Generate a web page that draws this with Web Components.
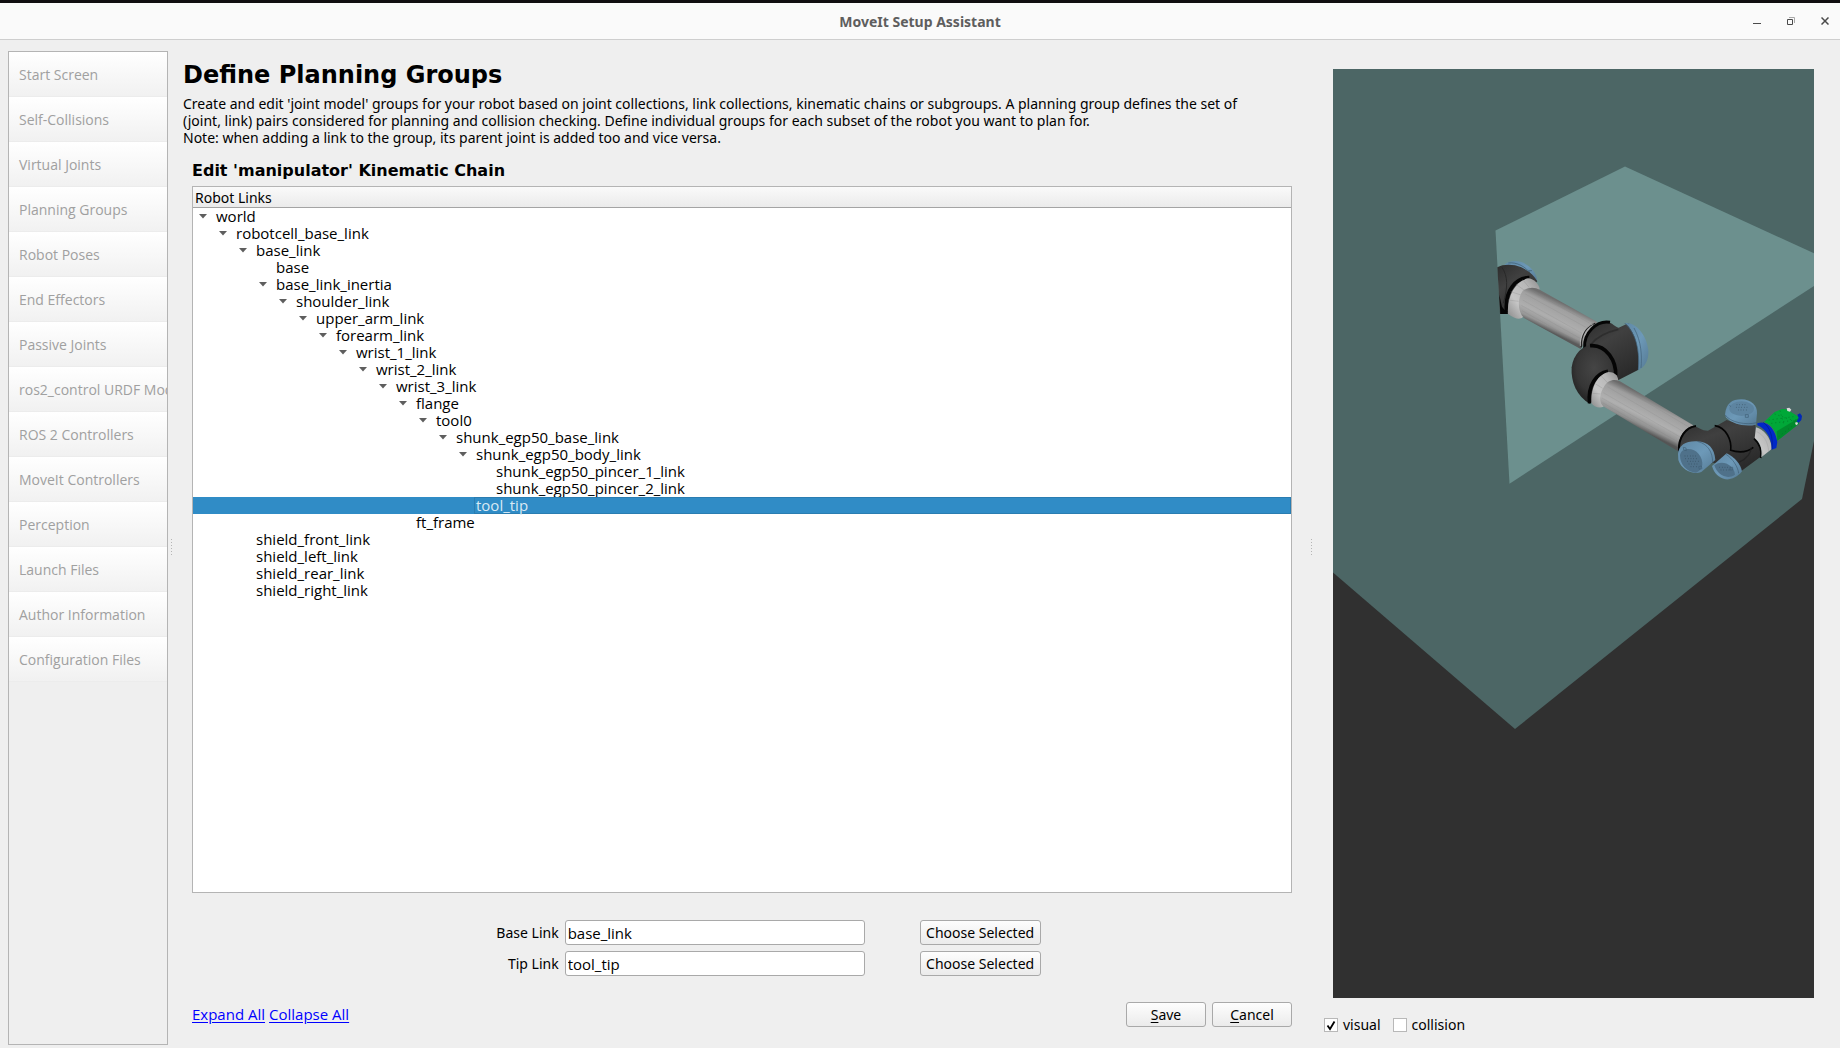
<!DOCTYPE html>
<html lang="en">
<head>
<meta charset="utf-8">
<title>MoveIt Setup Assistant</title>
<style>
  html, body { height: 100%; margin: 0; }
  body {
    --ui: "Noto Sans", "Open Sans", sans-serif;
    --tree: "Open Sans", "Noto Sans", sans-serif;
    --head: "DejaVu Sans", sans-serif;
    --line: #b4b4b4;
    --edge: #a9a9a9;
    background: #efefef;
    color: #000;
    font: 14px/17px var(--ui);
  }
</style>
</head>
<body>
<setup-window></setup-window>

<template id="t-window">
  <style>
    :host { display: flex; flex-direction: column; height: 100vh; overflow: hidden; }
    main { flex: 1; min-height: 0; display: flex; }
    .center { flex: 1; min-width: 0; display: flex; flex-direction: column; padding: 20px 16px 21px 8px; }
    h1 { margin: 0; font: bold 24px/30px var(--head); }
    .intro { margin: 5px 0 0; }
    h2 { margin: 15px 9px 5px; font: bold 16px/20px var(--head); }
    link-tree { flex: 1; min-height: 0; margin: 0 0 27px 9px; }
    .foot { display: flex; align-items: center; justify-content: space-between; margin-left: 9px; }
    .foot div { display: flex; gap: 6px; }
    .foot .links { gap: 4px; font: 15px/17px var(--tree); }
    a { color: #00f; text-decoration: underline; text-underline-offset: 2px; }
    .foot push-button { width: 80px; }
    u { text-underline-offset: 2px; }
  </style>
  <title-bar>MoveIt Setup Assistant</title-bar>
  <main>
    <nav-list></nav-list>
    <split-handle></split-handle>
    <section class="center">
      <h1>Define Planning Groups</h1>
      <p class="intro">Create and edit 'joint model' groups for your robot based on joint collections, link collections, kinematic chains or subgroups. A planning group defines the set of<br>(joint, link) pairs considered for planning and collision checking. Define individual groups for each subset of the robot you want to plan for.<br>Note: when adding a link to the group, its parent joint is added too and vice versa.</p>
      <h2>Edit 'manipulator' Kinematic Chain</h2>
      <link-tree></link-tree>
      <link-form></link-form>
      <div class="foot">
        <div class="links"><a href="#expand">Expand All</a><a href="#collapse">Collapse All</a></div>
        <div><push-button><u>S</u>ave</push-button><push-button><u>C</u>ancel</push-button></div>
      </div>
    </section>
    <split-handle></split-handle>
    <robot-panel></robot-panel>
  </main>
</template>

<template id="t-title">
  <style>
    :host { display: grid; grid-template-columns: 1fr auto 1fr; align-items: center; height: 36px; background: #fafafa; border-top: 3px solid #100e10; border-bottom: 1px solid #cecece; color: #5e5e5e; }
    h3 { grid-column: 2; margin: 0; padding-top: 2px; font: bold 14px/20px var(--ui); }
    .buttons { display: flex; justify-content: flex-end; gap: 18px; padding-right: 7px; }
    button { width: 16px; height: 16px; padding: 0; border: 0; background: none; display: grid; place-items: center; }
    svg { display: block; }
  </style>
  <h3><slot></slot></h3>
  <div class="buttons">
    <button aria-label="Minimize"><svg width="8" height="8"><path d="M0 6h8v1H0z" fill="#4a4a4a"/></svg></button>
    <button aria-label="Restore"><svg width="8" height="8" fill="none"><path d="M2 .5H7.500V6" stroke="#a8a8a8"/><path d="M.5 2.500h5v5h-5z" stroke="#4a4a4a"/></svg></button>
    <button aria-label="Close"><svg width="8" height="8"><path d="M.5.5l7 7M7.500.5l-7 7" stroke="#4a4a4a" stroke-width="1.500"/></svg></button>
  </div>
</template>

<template id="t-nav">
  <style>
    :host { display: block; flex: none; width: 158px; margin: 11px 0 3px 8px; border: 1px solid var(--line); overflow: hidden; }
    ul { margin: 0; padding: 0; list-style: none; }
    li { display: flex; align-items: center; height: 44px; padding-left: 10px; border-bottom: 1px solid #ececec; background: linear-gradient(#fff, #f1f1f1); color: #a0a0a0; white-space: nowrap; font: 14px/17px var(--tree); }
  </style>
  <ul></ul>
</template>

<template id="t-split">
  <style>
    :host { display: grid; place-items: center; flex: none; width: 7px; padding-top: 8px; }
    svg { display: block; }
  </style>
  <svg width="2" height="18"><path d="M.5 0V18" stroke="#b5b5b5" stroke-dasharray="1 2"/></svg>
</template>

<template id="t-tree">
  <style>
    :host { display: block; border: 1px solid var(--line); background: #fff; overflow: hidden; }
    .head { height: 20px; padding-left: 2px; border-bottom: 1px solid #a4a4a4; background: linear-gradient(#fafafa, #ebebeb); line-height: 21px; }
    ul { margin: 0; padding: 0; list-style: none; font: 15px/17px var(--tree); }
    li { display: flex; align-items: center; height: 17px; padding-left: calc(6px + 20px * var(--d)); }
    svg { flex: none; width: 8px; margin-right: 7px; }
    span { padding-left: 2px; }
    .sel { background: #308cc6; color: #d9e9f4; }
    .sel span { flex: 1; box-shadow: inset 0 0 0 1px #2a7db1; }
  </style>
  <div class="head">Robot Links</div>
  <ul></ul>
</template>

<template id="t-form">
  <style>
    :host { display: grid; grid-template-columns: auto 300px auto; gap: 6px; justify-content: center; align-items: center; margin: 0 0 26px 62px; }
    input { box-sizing: border-box; width: 100%; height: 25px; padding: 0 2px; border: 1px solid var(--edge); border-radius: 3px; background: #fff; color: #000; font: 15px/17px var(--tree); }
    label { text-align: right; }
    push-button { width: 121px; margin-left: 49px; }
  </style>
  <label for="base">Base Link</label><input id="base" value="base_link"><push-button>Choose Selected</push-button>
  <label for="tip">Tip Link</label><input id="tip" value="tool_tip"><push-button>Choose Selected</push-button>
</template>

<template id="t-button">
  <style>
    :host { display: block; }
    button { box-sizing: border-box; width: 100%; height: 25px; padding: 0; border: 1px solid var(--edge); border-radius: 3px; background: linear-gradient(#fdfdfd, #ebebeb); color: #000; font: 14px/17px var(--ui); white-space: nowrap; }
  </style>
  <button><slot></slot></button>
</template>

<template id="t-check">
  <style>
    :host { display: block; }
    label { display: flex; align-items: center; gap: 5px; line-height: 20px; }
    .box { display: grid; }
    .box > * { grid-area: 1 / 1; }
    input { appearance: none; box-sizing: border-box; width: 14px; height: 14px; margin: 0; border: 1px solid #b8b8b8; background: #fff; }
    svg { display: none; pointer-events: none; }
    input:checked + svg { display: block; }
  </style>
  <label><span class="box"><input type="checkbox"><svg width="14" height="14"><path d="M3.500 7.500L6 11 10.500 3.500" fill="none" stroke="#000" stroke-width="1.800"/></svg></span><slot></slot></label>
</template>

<template id="t-robot">
  <style>
    :host { display: flex; flex-direction: column; flex: none; width: 516px; margin-left: 9px; }
    .view { flex: 1; min-height: 0; margin: 29px 26px 17px 9px; background: #303030; overflow: hidden; display: flex; }
    svg { width: 100%; height: 100%; }
    .checks { display: flex; gap: 12px; padding-bottom: 13px; }
  </style>
  <div class="view">
    <svg viewBox="1333 69 481 929" preserveAspectRatio="xMinYMin slice" role="img" aria-label="Robot model">
      <defs>
        <linearGradient id="tube1" gradientUnits="userSpaceOnUse" x1="250" y1="190" x2="210" y2="275"><stop offset="0" stop-color="#6e6e6e"/><stop offset=".2" stop-color="#a0a0a0"/><stop offset=".6" stop-color="#aeaeae"/><stop offset=".85" stop-color="#969696"/><stop offset="1" stop-color="#5a5a5a"/></linearGradient>
        <linearGradient id="tube2" gradientUnits="userSpaceOnUse" x1="525" y1="480" x2="482" y2="570"><stop offset="0" stop-color="#6a6a6a"/><stop offset=".2" stop-color="#9e9e9e"/><stop offset=".6" stop-color="#b0b0b0"/><stop offset=".85" stop-color="#909090"/><stop offset="1" stop-color="#555"/></linearGradient>
        <linearGradient id="ring" x1="0" y1="1" x2="1" y2="0"><stop offset="0" stop-color="#8a8a8a"/><stop offset=".35" stop-color="#c6c6c6"/><stop offset=".7" stop-color="#b8b8b8"/><stop offset="1" stop-color="#8c8c8c"/></linearGradient>
        <linearGradient id="dark" x1="0" y1="0" x2=".6" y2="1"><stop offset="0" stop-color="#2c2c2c"/><stop offset=".4" stop-color="#404040"/><stop offset="1" stop-color="#2a2a2a"/></linearGradient>
        <radialGradient id="elbow" cx=".5" cy=".4" r=".65"><stop offset="0" stop-color="#454545"/><stop offset=".6" stop-color="#363636"/><stop offset="1" stop-color="#1b1b1b"/></radialGradient>
        <linearGradient id="blue" x1="0" y1="0" x2="1" y2="1"><stop offset="0" stop-color="#5f88a5"/><stop offset=".5" stop-color="#6d99b8"/><stop offset="1" stop-color="#557a94"/></linearGradient>
      </defs>
      <path fill="#4c6665" d="M1333 69H1814V441L1802 499 1515 729 1333 572.500z"/>
      <path fill="#6c908e" d="M1495.500 230.500L1625 166.500 1814 253.300V286L1509.500 483.700z"/>
      <g transform="translate(1480 240) scale(.33333)">
        <!-- shoulder -->
        <path fill="url(#blue)" d="M72 76C90 58 122 60 142 76 160 88 172 106 171 124L150 118 100 84z"/>
        <path fill="none" stroke="#3c5a6e" stroke-width="2" d="M85 69C110 65 140 82 150 100L146 92 156 92M150 100L164 120"/>
        <path fill="url(#dark)" d="M52 82C70 72 100 72 124 82 146 92 164 108 172 124L160 136 92 222 60 222z"/>
        <path fill="none" stroke="#282828" stroke-width="3" d="M66 82C84 110 84 140 70 190"/>
        <path fill="none" stroke="#050505" stroke-width="11" d="M148 113C110 112 72 150 80 218"/>
        <path fill="#050505" d="M58 165L66 200 84 222H61z"/>
        <!-- upper arm -->
        <path fill="url(#ring)" d="M144 115C160 116 176 130 179 147L128 232C120 240 104 237 84 222 80 170 104 124 144 115z"/>
        <path fill="none" stroke="#8d8d8d" d="M84 180L116 184M92 155L123 165M108 133L135 152M128 119L148 143"/>
        <path fill="url(#tube1)" d="M128 153C145 140 165 141 179 149L352 246 302 327 132 234C112 215 112 175 128 153z"/>
        <g fill="none" stroke="#777" stroke-opacity=".5"><path d="M150 150L330 250M136 162L318 262M128 180L306 280M124 196L302 296M126 212L300 309"/></g>
        <path fill="none" stroke="#222" stroke-width="4" d="M346 250C320 256 302 285 304 322"/>
        <path fill="none" stroke="#ccc" stroke-width="2" d="M340 251C315 260 300 287 301 318"/>
        <!-- elbow -->
        <path fill="url(#dark)" d="M312 318C312 280 350 240 384 246 398 250 404 260 416 263L445 250C485 270 500 340 474 390L414 421 370 400z"/>
        <path fill="none" stroke="#050505" stroke-width="9" d="M390 247C350 240 310 280 314 324"/>
        <path fill="none" stroke="#242424" stroke-width="5" d="M334 312C355 285 385 275 415 268" opacity=".6"/>
        <path fill="url(#blue)" d="M434 249C468 245 500 285 505 330 507 360 495 382 474 391 480 340 470 275 434 249z"/>
        <path fill="none" stroke="#3f5f76" stroke-width="2" d="M462 264C485 305 486 350 483 384M434 249C468 280 480 330 475 390"/>
        <path fill="url(#elbow)" d="M340 313C380 318 410 365 410 405L330 492C290 470 272 425 275 382 280 342 308 316 340 313z"/>
        <path fill="none" stroke="#050505" stroke-width="11" d="M330 317C380 312 410 365 407 408"/>
        <path fill="none" stroke="#050505" stroke-width="11" d="M384 394C350 400 322 435 329 490"/>
        <!-- forearm -->
        <path fill="url(#ring)" d="M386 396C402 396 414 404 415 423L370 500C358 506 340 500 334 488 332 440 354 402 386 396z"/>
        <path fill="none" stroke="#8d8d8d" d="M337 460L362 462M347 432L368 445M364 408L384 430"/>
        <path fill="url(#tube2)" d="M372 440C384 420 402 416 420 424L640 556 594 634 372 500C356 490 358 460 372 440z"/>
        <g fill="none" stroke="#777" stroke-opacity=".5"><path d="M400 427L628 562M382 440L612 576M370 458L602 592M366 474L597 608M368 488L594 620"/></g>
        <!-- wrist -->
        <path fill="url(#dark)" d="M596 632C592 590 620 556 642 558 656 562 664 572 684 572L740 540C770 550 800 560 826 554L828 600C840 610 846 630 842 650L780 696 700 668 640 690z"/>
        <path fill="none" stroke="#050505" stroke-width="6" d="M648 558C618 562 594 592 597 634"/>
        <path fill="none" stroke="#050505" stroke-width="5" d="M704 557C738 562 756 600 752 632M750 630C780 640 805 634 820 622M822 596C840 612 846 632 842 654"/>
        <path fill="none" stroke="#202020" stroke-width="4" d="M814 622C812 642 800 656 778 666" opacity=".7"/>
        <path fill="url(#blue)" d="M735 524C738 490 756 478 784 478 814 479 832 496 831 520L828 554C795 562 755 552 738 532z"/>
        <ellipse cx="785" cy="506" rx="37" ry="22" fill="#5d84a0"/>
        <path fill="none" stroke="#3f5f76" stroke-width="2" d="M735 524C750 548 800 556 830 548M796 524h9v8h-9zM748 496l5 4"/>
        <path fill="url(#blue)" d="M696 678L740 640C762 650 782 672 786 694 772 712 752 720 736 718 716 712 702 700 696 678z"/>
        <path fill="#4f718a" d="M703 676C726 658 762 674 765 704 742 720 712 706 703 676z"/>
        <path fill="none" stroke="#3f5f76" stroke-width="2" d="M738 643C758 656 774 680 776 700M750 682h8v8h-8z"/>
        <path fill="url(#blue)" d="M594 642C596 614 620 602 652 604 684 606 704 624 706 660L664 696C640 706 604 690 595 660z"/>
        <path fill="#4f718a" d="M600 646C602 622 640 620 656 642 672 662 672 690 648 698 620 696 600 674 600 646z"/>
        <path fill="none" stroke="#3f5f76" stroke-width="2" d="M652 604C684 612 698 636 698 668M610 622l8 2 1 8-8-2zM656 680l8-2 2 8-8 2z"/>
        <g fill="none" stroke="#2d4353" stroke-width="2" stroke-dasharray="2 6"><path d="M614 648h36M616 656h38M622 664h34M626 672h30M632 680h20M770 494h30M768 502h34M774 510h26M718 682h26M722 690h26"/></g>
        <!-- gripper -->
        <path fill="url(#ring)" d="M828 562C850 568 872 590 876 626L844 652C848 622 838 606 824 594z"/>
        <path fill="none" stroke="#999" d="M830 575C852 585 864 606 866 634"/>
        <path fill="#0028c8" d="M832 550C860 538 886 566 892 606L889 624 875 629C876 600 862 568 832 556z"/>
        <path fill="none" stroke="#001a86" stroke-width="2" d="M850 547C870 562 880 590 876 628"/>
        <path fill="#00a838" d="M852 546L884 516 906 507 920 508 958 532 956 552 892 602C888 575 876 554 852 546z"/>
        <path fill="#008a2c" d="M890 574L956 534 956 552 892 602z"/>
        <g fill="none" stroke="#006c22" stroke-width="2" stroke-dasharray="3 9"><path d="M866 540L940 530M884 522L950 545M874 550L948 540M896 590L954 545M900 512L912 556"/></g>
        <path fill="#d8d8d8" d="M920 505l8-2 6 6-4 6-8-2zM945 548l7-2 2 6-6 4z"/>
        <path fill="#0028b8" d="M952 524l8-4 6 8-2 12-8 8-6-4 6-10z"/>
      </g>
    </svg>
  </div>
  <div class="checks"><check-box checked>visual</check-box><check-box>collision</check-box></div>
</template>

<script>
  class Base extends HTMLElement {
    constructor() {
      super();
      const t = document.getElementById(this.constructor.template);
      this.attachShadow({ mode: "open" }).append(t.content.cloneNode(true));
    }
  }
  const define = (name, id, init) => customElements.define(name, class extends Base {
    static template = id;
    connectedCallback() { if (init) init(this, this.shadowRoot); }
  });

  define("title-bar", "t-title");
  define("split-handle", "t-split");
  define("push-button", "t-button");
  define("link-form", "t-form");
  define("robot-panel", "t-robot");
  define("check-box", "t-check", (el, root) => {
    root.querySelector("input").checked = el.hasAttribute("checked");
  });

  const pages = ["Start Screen", "Self-Collisions", "Virtual Joints", "Planning Groups", "Robot Poses",
    "End Effectors", "Passive Joints", "ros2_control URDF Modifications", "ROS 2 Controllers",
    "MoveIt Controllers", "Perception", "Launch Files", "Author Information", "Configuration Files"];
  define("nav-list", "t-nav", (el, root) => {
    root.querySelector("ul").innerHTML = pages.map(p => `<li>${p}</li>`).join("");
  });

  // [depth, name, has children]
  const links = [[0, "world", 1], [1, "robotcell_base_link", 1], [2, "base_link", 1], [3, "base"],
    [3, "base_link_inertia", 1], [4, "shoulder_link", 1], [5, "upper_arm_link", 1], [6, "forearm_link", 1],
    [7, "wrist_1_link", 1], [8, "wrist_2_link", 1], [9, "wrist_3_link", 1], [10, "flange", 1],
    [11, "tool0", 1], [12, "shunk_egp50_base_link", 1], [13, "shunk_egp50_body_link", 1],
    [14, "shunk_egp50_pincer_1_link"], [14, "shunk_egp50_pincer_2_link"], [13, "tool_tip"],
    [10, "ft_frame"], [2, "shield_front_link"], [2, "shield_left_link"], [2, "shield_rear_link"],
    [2, "shield_right_link"]];
  define("link-tree", "t-tree", (el, root) => {
    root.querySelector("ul").innerHTML = links.map(([d, name, open]) =>
      `<li style="--d:${d}"${name === "tool_tip" ? ' class="sel"' : ""}><svg height="5">${
        open ? '<path d="M0 0H8L4 4.500z" fill="#5e5e5e"/>' : ""}</svg><span>${name}</span></li>`).join("");
  });

  define("setup-window", "t-window");
</script>
</body>
</html>
